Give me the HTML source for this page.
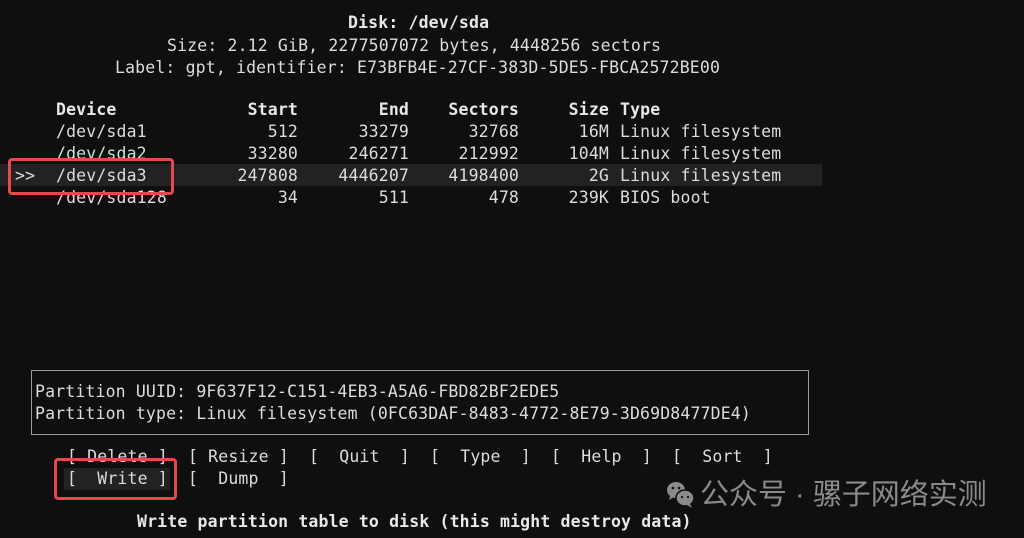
<!DOCTYPE html>
<html><head><meta charset="utf-8"><style>
html,body{margin:0;padding:0;background:#0f0f0f;width:1024px;height:538px;overflow:hidden;position:relative}
.t{position:absolute;font-family:"DejaVu Sans Mono","Liberation Mono",monospace;font-size:16.5px;line-height:22px;color:#dcdcdc;white-space:pre;letter-spacing:0.15px}
.b{font-weight:bold;color:#e8e8e8}
.r{text-align:right}
</style></head><body>
<div class="t b" style="left:348px;top:12px">Disk: /dev/sda</div>
<div class="t" style="left:167px;top:35px">Size: 2.12 GiB, 2277507072 bytes, 4448256 sectors</div>
<div class="t" style="left:115px;top:57px">Label: gpt, identifier: E73BFB4E-27CF-383D-5DE5-FBCA2572BE00</div>

<div style="position:absolute;left:0;top:164px;width:822px;height:22px;background:#222"></div>

<div class="t b" style="left:56px;top:99px">Device</div>
<div class="t b r" style="right:726px;top:99px">Start</div>
<div class="t b r" style="right:615px;top:99px">End</div>
<div class="t b r" style="right:505px;top:99px">Sectors</div>
<div class="t b r" style="right:415px;top:99px">Size</div>
<div class="t b" style="left:620px;top:99px">Type</div>

<div class="t" style="left:56px;top:121px">/dev/sda1</div>
<div class="t r" style="right:726px;top:121px">512</div>
<div class="t r" style="right:615px;top:121px">33279</div>
<div class="t r" style="right:505px;top:121px">32768</div>
<div class="t r" style="right:415px;top:121px">16M</div>
<div class="t" style="left:620px;top:121px">Linux filesystem</div>

<div class="t" style="left:56px;top:143px">/dev/sda2</div>
<div class="t r" style="right:726px;top:143px">33280</div>
<div class="t r" style="right:615px;top:143px">246271</div>
<div class="t r" style="right:505px;top:143px">212992</div>
<div class="t r" style="right:415px;top:143px">104M</div>
<div class="t" style="left:620px;top:143px">Linux filesystem</div>

<div class="t" style="left:15px;top:165px">&gt;&gt;</div>
<div class="t" style="left:56px;top:165px">/dev/sda3</div>
<div class="t r" style="right:726px;top:165px">247808</div>
<div class="t r" style="right:615px;top:165px">4446207</div>
<div class="t r" style="right:505px;top:165px">4198400</div>
<div class="t r" style="right:415px;top:165px">2G</div>
<div class="t" style="left:620px;top:165px">Linux filesystem</div>

<div class="t" style="left:56px;top:187px">/dev/sda128</div>
<div class="t r" style="right:726px;top:187px">34</div>
<div class="t r" style="right:615px;top:187px">511</div>
<div class="t r" style="right:505px;top:187px">478</div>
<div class="t r" style="right:415px;top:187px">239K</div>
<div class="t" style="left:620px;top:187px">BIOS boot</div>

<div style="position:absolute;left:8px;top:158px;width:160px;height:31px;border:3px solid #e5484d;border-radius:4px"></div>

<div style="position:absolute;left:31px;top:370px;width:776px;height:63px;border:1px solid #9a9a9a"></div>
<div class="t" style="left:35px;top:381px">Partition UUID: 9F637F12-C151-4EB3-A5A6-FBD82BF2EDE5</div>
<div class="t" style="left:35px;top:403px">Partition type: Linux filesystem (0FC63DAF-8483-4772-8E79-3D69D8477DE4)</div>

<div style="position:absolute;left:64px;top:468px;width:106px;height:22px;background:#222"></div>
<div class="t" style="left:67px;top:446px">[ Delete ]  [ Resize ]  [  Quit  ]  [  Type  ]  [  Help  ]  [  Sort  ]</div>
<div class="t" style="left:67px;top:468px">[  Write ]  [  Dump  ]</div>
<div style="position:absolute;left:54px;top:458px;width:117px;height:36px;border:3px solid #e5484d;border-radius:4px"></div>

<div class="t b" style="left:137px;top:511px">Write partition table to disk (this might destroy data)</div>

<svg style="position:absolute;left:666px;top:480px" width="30" height="30" viewBox="0 0 30 30">
<ellipse cx="10" cy="10" rx="9" ry="8" fill="#8a8a8a"/>
<path d="M4 16 L3 20 L8 17Z" fill="#8a8a8a"/>
<ellipse cx="19" cy="18" rx="9" ry="8" fill="#8a8a8a" stroke="#0f0f0f" stroke-width="1.5"/>
<path d="M24 24 L26 28 L21 25Z" fill="#8a8a8a"/>
<circle cx="7" cy="8" r="1.3" fill="#0f0f0f"/><circle cx="13" cy="8" r="1.3" fill="#0f0f0f"/>
<circle cx="16" cy="17" r="1.1" fill="#0f0f0f"/><circle cx="22" cy="17" r="1.1" fill="#0f0f0f"/>
</svg>
<div style="position:absolute;left:700px;top:477px;font-family:'Liberation Sans','Noto Sans CJK SC',sans-serif;font-size:29px;line-height:36px;color:#8a8a8a;white-space:nowrap">公众号 · 骡子网络实测</div>
</body></html>
